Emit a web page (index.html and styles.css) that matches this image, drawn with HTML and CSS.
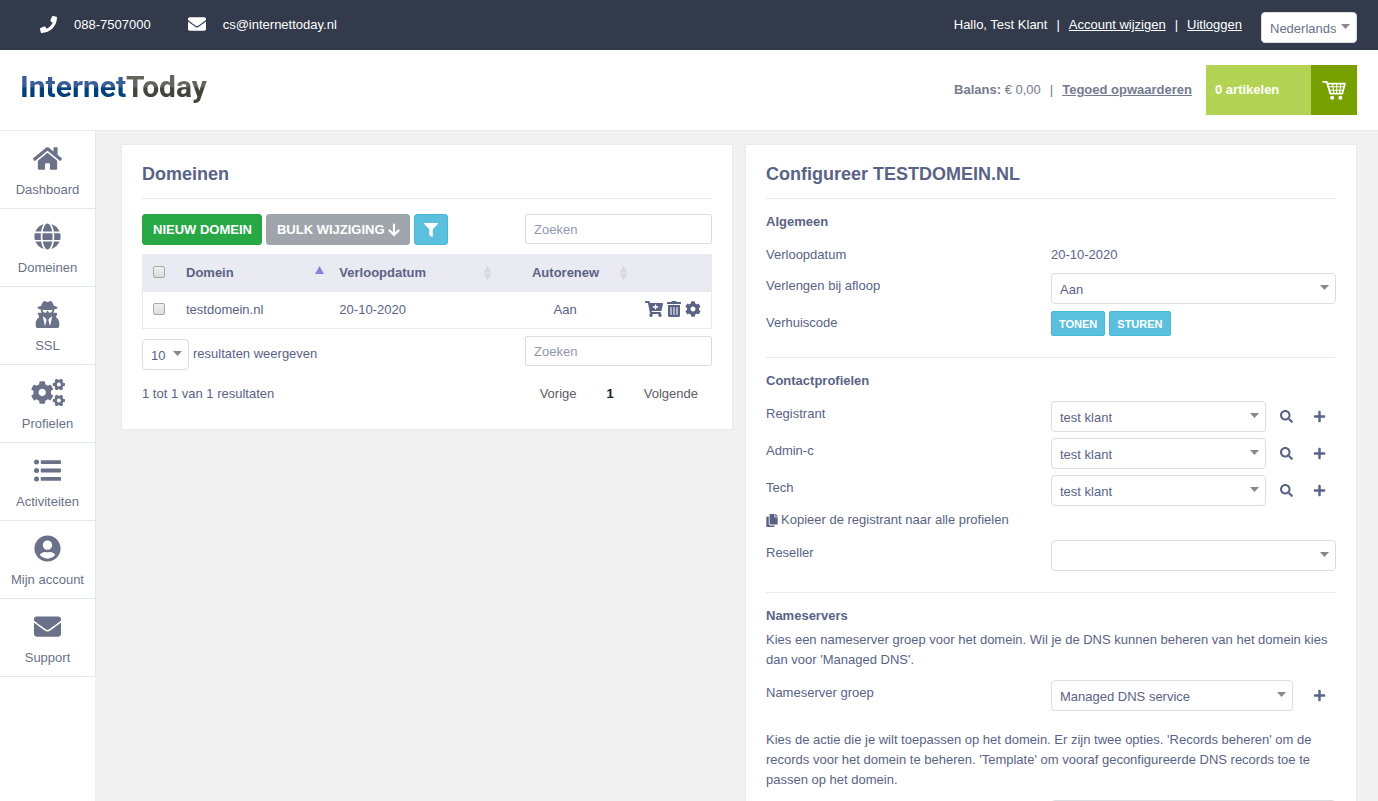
FILE: index.html
```html
<!DOCTYPE html>
<html lang="nl">
<head>
<meta charset="utf-8">
<meta name="viewport" content="width=device-width, initial-scale=1">
<title>Domeinen - InternetToday</title>
<link rel="stylesheet" href="styles.css">
</head>
<body>
<svg class="sprite" aria-hidden="true">
  <symbol id="i-phone" viewBox="0 0 512 512"><path d="M493.4 24.6l-104-24c-11.3-2.6-22.9 3.3-27.5 13.9l-48 112c-4.2 9.8-1.4 21.3 6.9 28l60.6 49.6c-36 76.7-98.9 140.5-177.2 177.2l-49.6-60.6c-6.8-8.3-18.2-11.1-28-6.9l-112 48C3.9 366.5-2 378.1.6 389.4l24 104C27.1 504.2 36.7 512 48 512c256.1 0 464-207.5 464-464 0-11.2-7.7-20.9-18.6-23.4z"/></symbol>
  <symbol id="i-envelope" viewBox="0 0 512 512"><path d="M502.3 190.8c3.9-3.1 9.7-.2 9.7 4.7V400c0 26.5-21.5 48-48 48H48c-26.5 0-48-21.5-48-48V195.6c0-5 5.7-7.8 9.7-4.7 22.4 17.4 52.1 39.5 154.1 113.6 21.1 15.4 56.7 47.8 92.2 47.6 35.7.3 72-32.8 92.3-47.6 102-74.1 131.6-96.3 154-113.7zM256 320c23.2.4 56.6-29.2 73.4-41.4 132.7-96.3 142.8-104.7 173.4-128.7 5.8-4.5 9.2-11.5 9.2-18.9v-19c0-26.5-21.5-48-48-48H48c-26.5 0-48 21.5-48 48v19c0 7.4 3.4 14.3 9.2 18.9 30.6 23.9 40.7 32.4 173.4 128.7 16.8 12.2 50.2 41.8 73.4 41.4z"/></symbol>
  <symbol id="i-home" viewBox="0 0 576 512"><path d="M280.37 148.26L96 300.11V464a16 16 0 0 0 16 16l112.06-.29a16 16 0 0 0 15.92-16V368a16 16 0 0 1 16-16h64a16 16 0 0 1 16 16v95.64a16 16 0 0 0 16 16.05L464 480a16 16 0 0 0 16-16V300L295.67 148.26a12.19 12.19 0 0 0-15.3 0zM571.6 251.47L488 182.56V44.05a12 12 0 0 0-12-12h-56a12 12 0 0 0-12 12v72.61L318.47 43a48 48 0 0 0-61 0L4.34 251.47a12 12 0 0 0-1.6 16.9l25.5 31A12 12 0 0 0 45.15 301l235.22-193.74a12.19 12.19 0 0 1 15.3 0L530.9 301a12 12 0 0 0 16.9-1.6l25.5-31a12 12 0 0 0-1.7-16.93z"/></symbol>
  <symbol id="i-globe" viewBox="0 0 496 512"><path d="M336.5 160C322 70.7 287.8 8 248 8s-74 62.7-88.5 152h177zM152 256c0 22.2 1.2 43.5 3.3 64h185.3c2.1-20.5 3.3-41.8 3.3-64s-1.2-43.5-3.3-64H155.3c-2.1 20.5-3.3 41.8-3.3 64zm324.7-96c-28.6-67.9-86.5-120.4-158-141.6 24.4 33.8 41.2 84.7 50 141.6h108zM177.2 18.4C105.8 39.6 47.8 92.1 19.3 160h108c8.7-56.9 25.5-107.8 49.9-141.6zM487.4 192H372.7c2.1 21 3.3 42.5 3.3 64s-1.2 43-3.3 64h114.6c5.5-20.5 8.6-41.8 8.6-64s-3.1-43.5-8.5-64zM120 256c0-21.5 1.2-43 3.3-64H8.6C3.2 212.5 0 233.8 0 256s3.2 43.5 8.6 64h114.6c-2-21-3.2-42.5-3.2-64zm39.5 96c14.5 89.3 48.7 152 88.5 152s74-62.7 88.5-152h-177zm159.3 141.6c71.4-21.2 129.4-73.7 158-141.6h-108c-8.8 56.9-25.6 107.8-50 141.6zM19.3 352c28.6 67.9 86.5 120.4 158 141.6-24.4-33.8-41.2-84.7-50-141.6h-108z"/></symbol>
  <symbol id="i-secret" viewBox="0 0 448 512"><path d="M383.9 308.3l23.9-62.6c4-10.5-3.7-21.7-15-21.7h-58.5c11-18.9 17.8-40.6 17.8-64v-.3c39.2-7.8 64-19.1 64-31.7 0-13.3-27.3-25.1-70.1-33-9.2-32.8-27-65.8-40.6-82.8-9.5-11.9-25.9-15.6-39.5-8.8l-27.6 13.8c-9 4.5-19.6 4.5-28.6 0L182.1 3.4c-13.6-6.8-30-3.1-39.5 8.8-13.5 17-31.4 50-40.6 82.8-42.7 7.9-70 19.7-70 33 0 12.6 24.8 23.9 64 31.7v.3c0 23.4 6.8 45.1 17.8 64H56.3c-11.5 0-19.2 11.7-14.7 22.3l25.8 60.2C27.3 329.8 0 372.7 0 422.4v44.8C0 491.9 20.1 512 44.8 512h358.4c24.7 0 44.8-20.1 44.8-44.8v-44.8c0-48.4-25.8-90.4-64.1-114.1zM176 480l-41.6-192 49.6 32 24 40-32 120zm96 0l-32-120 24-40 49.6-32L272 480zm41.7-298.5c-3.9 11.9-7 24.6-16.5 33.4-10.1 9.3-48 22.4-64-25-2.8-8.4-15.4-8.4-18.3 0-17 50.2-56 32.4-64 25-9.5-8.8-12.7-21.5-16.5-33.4-.8-2.5-6.3-5.7-6.3-5.8v-10.8c28.3 3.6 61 5.8 96 5.8s67.7-2.1 96-5.8v10.8c-.1.1-5.6 3.2-6.4 5.8z"/></symbol>
  <symbol id="i-cog" viewBox="0 0 512 512"><path d="M487.4 315.7l-42.6-24.6c4.3-23.2 4.3-47 0-70.2l42.6-24.6c4.9-2.8 7.1-8.6 5.5-14-11.1-35.6-30-67.8-54.7-94.6-3.8-4.1-10-5.1-14.8-2.3L380.8 110c-17.9-15.4-38.5-27.3-60.8-35.1V25.8c0-5.6-3.9-10.5-9.4-11.7-36.7-8.2-74.3-7.8-109.2 0-5.5 1.2-9.4 6.1-9.4 11.7V75c-22.2 7.9-42.8 19.8-60.8 35.1L88.7 85.5c-4.9-2.8-11-1.9-14.8 2.3-24.7 26.7-43.6 58.9-54.7 94.6-1.7 5.4.6 11.2 5.5 14L67.3 221c-4.3 23.2-4.3 47 0 70.2l-42.6 24.6c-4.9 2.8-7.1 8.6-5.5 14 11.1 35.6 30 67.8 54.7 94.6 3.8 4.1 10 5.1 14.8 2.3l42.6-24.6c17.9 15.4 38.5 27.3 60.8 35.1v49.2c0 5.6 3.9 10.5 9.4 11.7 36.7 8.2 74.3 7.8 109.2 0 5.5-1.2 9.4-6.1 9.4-11.7v-49.2c22.2-7.9 42.8-19.8 60.8-35.1l42.6 24.6c4.9 2.8 11 1.9 14.8-2.3 24.7-26.7 43.6-58.9 54.7-94.6 1.5-5.5-.7-11.3-5.6-14.1zM256 336c-44.1 0-80-35.9-80-80s35.9-80 80-80 80 35.9 80 80-35.9 80-80 80z"/></symbol>
  <symbol id="i-cogs" viewBox="0 0 640 512"><use href="#i-cog" x="-12" y="34" width="444" height="444"/><g transform="rotate(30 526 104)"><use href="#i-cog" x="406" y="-16" width="240" height="240"/></g><g transform="rotate(30 526 408)"><use href="#i-cog" x="406" y="288" width="240" height="240"/></g></symbol>
  <symbol id="i-list" viewBox="0 0 512 512"><circle cx="48" cy="96" r="48"/><circle cx="48" cy="256" r="48"/><circle cx="48" cy="416" r="48"/><rect x="128" y="60" width="384" height="72" rx="16"/><rect x="128" y="220" width="384" height="72" rx="16"/><rect x="128" y="380" width="384" height="72" rx="16"/></symbol>
  <symbol id="i-user" viewBox="0 0 496 512"><path d="M248 8C111 8 0 119 0 256s111 248 248 248 248-111 248-248S385 8 248 8zm0 96c48.600 0 88 39.400 88 88s-39.400 88-88 88-88-39.400-88-88 39.400-88 88-88zm0 344c-58.700 0-111.300-26.600-146.500-68.200 18.800-35.400 55.600-59.800 98.500-59.800 2.400 0 4.800.4 7.100 1.100 13 4.200 26.600 6.900 40.900 6.900 14.300 0 28-2.700 40.900-6.900 2.300-.7 4.700-1.100 7.100-1.100 42.900 0 79.700 24.400 98.500 59.800C359.300 421.400 306.700 448 248 448z"/></symbol>
  <symbol id="i-filter" viewBox="0 0 512 512"><path d="M487.976 0H24.028C2.71 0-8.047 25.866 7.058 40.971L192 225.941V432c0 7.831 3.821 15.17 10.237 19.662l80 55.98C298.02 518.69 320 507.493 320 487.98V225.941l184.947-184.97C520.021 25.896 509.338 0 487.976 0z"/></symbol>
  <symbol id="i-down" viewBox="0 0 12 14"><path d="M6 1.500V12M1.500 7.500L6 12l4.500-4.500" fill="none" stroke="currentColor" stroke-width="2.200" stroke-linecap="round"/></symbol>
  <symbol id="i-cartplus" viewBox="0 0 576 512"><path d="M504.717 320H211.572l6.545 32h268.418c15.401 0 26.816 14.301 23.403 29.319l-5.517 24.276C523.112 414.668 536 433.828 536 456c0 31.202-25.519 56.444-56.824 55.994-29.823-.429-54.350-24.631-55.155-54.447-.44-16.287 6.085-31.049 16.803-41.548H231.176C241.553 426.165 248 440.326 248 456c0 31.813-26.528 57.431-58.670 55.938-28.540-1.325-51.751-24.385-53.251-52.917-1.158-22.034 10.436-41.455 28.051-51.586L93.883 64H24C10.745 64 0 53.255 0 40V24C0 10.745 10.745 0 24 0h102.529c11.401 0 21.228 8.021 23.513 19.190L159.208 64H551.990c15.401 0 26.816 14.301 23.403 29.319l-47.273 208C525.637 312.246 515.923 320 504.717 320zM408 168h-48v-40c0-8.837-7.163-16-16-16h-16c-8.837 0-16 7.163-16 16v40h-48c-8.837 0-16 7.163-16 16v16c0 8.837 7.163 16 16 16h48v40c0 8.837 7.163 16 16 16h16c8.837 0 16-7.163 16-16v-40h48c8.837 0 16-7.163 16-16v-16c0-8.837-7.163-16-16-16z"/></symbol>
  <symbol id="i-trash" viewBox="0 0 448 512"><path d="M32 464a48 48 0 0 0 48 48h288a48 48 0 0 0 48-48V128H32zm272-256a16 16 0 0 1 32 0v224a16 16 0 0 1-32 0zm-96 0a16 16 0 0 1 32 0v224a16 16 0 0 1-32 0zm-96 0a16 16 0 0 1 32 0v224a16 16 0 0 1-32 0zM432 32H312l-9.400-18.700A24 24 0 0 0 281.100 0H166.800a23.720 23.720 0 0 0-21.400 13.300L136 32H16A16 16 0 0 0 0 48v32a16 16 0 0 0 16 16h416a16 16 0 0 0 16-16V48a16 16 0 0 0-16-16z"/></symbol>
  <symbol id="i-search" viewBox="0 0 512 512"><path d="M505 442.700L405.300 343c-4.500-4.500-10.600-7-17-7H372c27.600-35.300 44-79.700 44-128C416 93.100 322.900 0 208 0S0 93.100 0 208s93.100 208 208 208c48.300 0 92.700-16.400 128-44v16.300c0 6.400 2.500 12.500 7 17l99.700 99.700c9.400 9.400 24.600 9.400 33.900 0l28.300-28.300c9.400-9.400 9.400-24.600.1-34zM208 336c-70.700 0-128-57.200-128-128 0-70.700 57.200-128 128-128 70.700 0 128 57.200 128 128 0 70.700-57.200 128-128 128z"/></symbol>
  <symbol id="i-plus" viewBox="0 0 448 512"><path d="M416 208H272V64c0-17.670-14.330-32-32-32h-32c-17.670 0-32 14.330-32 32v144H32c-17.670 0-32 14.330-32 32v32c0 17.670 14.330 32 32 32h144v144c0 17.670 14.330 32 32 32h32c17.670 0 32-14.330 32-32V304h144c17.670 0 32-14.330 32-32v-32c0-17.670-14.330-32-32-32z"/></symbol>
  <symbol id="i-copy" viewBox="0 0 448 512"><path d="M320 448v40c0 13.255-10.745 24-24 24H24c-13.255 0-24-10.745-24-24V120c0-13.255 10.745-24 24-24h72v296c0 30.879 25.121 56 56 56h168zm0-344V0H152c-13.255 0-24 10.745-24 24v368c0 13.255 10.745 24 24 24h272c13.255 0 24-10.745 24-24V128H344c-13.200 0-24-10.800-24-24zm120.971-31.029L375.029 7.029A24 24 0 0 0 358.059 0H352v96h96v-6.059a24 24 0 0 0-7.029-16.970z"/></symbol>
  <symbol id="i-basket" viewBox="0 0 26 22"><g fill="none" stroke="currentColor" stroke-width="2"><path d="M1 2h4l4 13h13l3-11H6" stroke-linejoin="round" stroke-linecap="round"/><path d="M7 7.500h17M8 11.300h15M11.500 4l1.300 11M16 4v11M20.500 4l-1.300 11" stroke-width="1.200"/></g><circle cx="11" cy="19.500" r="2.200"/><circle cx="20" cy="19.500" r="2.200"/></symbol>
  <symbol id="i-sort" viewBox="0 0 9 14"><path d="M4.500 0L8.500 6.500h-8zM4.500 14L.5 7.500h8z"/></symbol>
  <symbol id="i-asc" viewBox="0 0 9 14"><path d="M4.500 0L9 8H0z"/></symbol>
</svg>

<div class="topbar">
  <div class="contact">
    <svg class="contact-icon"><use href="#i-phone"/></svg><span>088-7507000</span>
    <svg class="contact-icon contact-mail"><use href="#i-envelope"/></svg><span>cs@internettoday.nl</span>
  </div>
  <div class="session">
    <span>Hallo, Test Klant</span><span>|</span><a href="#">Account wijzigen</a><span>|</span><a href="#">Uitloggen</a>
    <select class="select language" aria-label="Taal"><option>Nederlands</option></select>
  </div>
</div>

<header class="header">
  <a class="logo" href="#" aria-label="InternetToday"><span class="logo-blue">Internet</span><span class="logo-grey">Today</span></a>
  <div class="account">
    <span><b>Balans:</b> € 0,00</span><span>|</span><a href="#">Tegoed opwaarderen</a>
    <a class="cart" href="#"><span class="cart-count">0 artikelen</span><span class="cart-icon"><svg><use href="#i-basket"/></svg></span></a>
  </div>
</header>

<div class="shell">
  <nav class="sidebar">
    <a href="#"><svg><use href="#i-home"/></svg>Dashboard</a>
    <a href="#"><svg><use href="#i-globe"/></svg>Domeinen</a>
    <a href="#"><svg><use href="#i-secret"/></svg>SSL</a>
    <a href="#"><svg class="wide"><use href="#i-cogs"/></svg>Profielen</a>
    <a href="#"><svg><use href="#i-list"/></svg>Activiteiten</a>
    <a href="#"><svg><use href="#i-user"/></svg>Mijn account</a>
    <a href="#"><svg><use href="#i-envelope"/></svg>Support</a>
  </nav>

  <main class="content">
    <section class="panel">
      <h2>Domeinen</h2>
      <div class="toolbar">
        <button class="btn btn-green" type="button">NIEUW DOMEIN</button>
        <button class="btn btn-grey" type="button">BULK WIJZIGING <svg><use href="#i-down"/></svg></button>
        <button class="btn btn-blue btn-filter" type="button" aria-label="Filter"><svg><use href="#i-filter"/></svg></button>
        <input class="search" type="search" placeholder="Zoeken" aria-label="Zoeken">
      </div>
      <table class="domains">
        <colgroup><col class="c-check"><col class="c-name"><col class="c-date"><col class="c-renew"><col></colgroup>
        <thead>
          <tr>
            <th><input class="check" type="checkbox" aria-label="Alles selecteren"></th>
            <th><div class="sort">Domein<svg class="asc"><use href="#i-asc"/></svg></div></th>
            <th><div class="sort">Verloopdatum<svg><use href="#i-sort"/></svg></div></th>
            <th><div class="sort sort-center">Autorenew<svg><use href="#i-sort"/></svg></div></th>
            <th></th>
          </tr>
        </thead>
        <tbody>
          <tr>
            <td><input class="check" type="checkbox" aria-label="testdomein.nl selecteren"></td>
            <td>testdomein.nl</td>
            <td>20-10-2020</td>
            <td class="center">Aan</td>
            <td><div class="actions">
              <button type="button" aria-label="Bestellen"><svg class="w18"><use href="#i-cartplus"/></svg></button>
              <button type="button" aria-label="Verwijderen"><svg class="w14"><use href="#i-trash"/></svg></button>
              <button type="button" aria-label="Instellingen"><svg class="w16"><use href="#i-cog"/></svg></button>
            </div></td>
          </tr>
        </tbody>
      </table>
      <div class="table-tools">
        <label class="length"><select class="select length-select"><option>10</option></select><span>resultaten weergeven</span></label>
        <input class="search" type="search" placeholder="Zoeken" aria-label="Zoeken in tabel">
      </div>
      <div class="table-foot">
        <span>1 tot 1 van 1 resultaten</span>
        <div class="pages"><button type="button">Vorige</button><button class="current" type="button">1</button><button type="button">Volgende</button></div>
      </div>
    </section>

    <section class="panel">
      <h2>Configureer TESTDOMEIN.NL</h2>
      <div class="group">
        <h3>Algemeen</h3>
        <div class="rows">
          <div class="row row-text"><span class="label">Verloopdatum</span><span class="label">20-10-2020</span></div>
          <div class="row"><label class="label" for="renew">Verlengen bij afloop</label><div class="field"><select class="select" id="renew"><option>Aan</option></select></div></div>
          <div class="row"><span class="label">Verhuiscode</span><div class="field small-buttons"><button class="btn btn-blue btn-small" type="button">TONEN</button><button class="btn btn-blue btn-small" type="button">STUREN</button></div></div>
        </div>
      </div>
      <div class="group">
        <h3>Contactprofielen</h3>
        <div class="rows">
          <div class="row"><label class="label" for="registrant">Registrant</label><div class="field"><select class="select" id="registrant"><option>test klant</option></select><button class="icon-btn" type="button" aria-label="Zoek registrant"><svg><use href="#i-search"/></svg></button><button class="icon-btn" type="button" aria-label="Nieuwe registrant"><svg><use href="#i-plus"/></svg></button></div></div>
          <div class="row"><label class="label" for="admin">Admin-c</label><div class="field"><select class="select" id="admin"><option>test klant</option></select><button class="icon-btn" type="button" aria-label="Zoek admin-c"><svg><use href="#i-search"/></svg></button><button class="icon-btn" type="button" aria-label="Nieuwe admin-c"><svg><use href="#i-plus"/></svg></button></div></div>
          <div class="row"><label class="label" for="tech">Tech</label><div class="field"><select class="select" id="tech"><option>test klant</option></select><button class="icon-btn" type="button" aria-label="Zoek tech"><svg><use href="#i-search"/></svg></button><button class="icon-btn" type="button" aria-label="Nieuwe tech"><svg><use href="#i-plus"/></svg></button></div></div>
        </div>
        <a class="copy" href="#"><svg><use href="#i-copy"/></svg>Kopieer de registrant naar alle profielen</a>
        <div class="rows">
          <div class="row"><label class="label" for="reseller">Reseller</label><div class="field"><select class="select" id="reseller"><option></option></select></div></div>
        </div>
      </div>
      <div class="group">
        <h3>Nameservers</h3>
        <p class="intro">Kies een nameserver groep voor het domein. Wil je de DNS kunnen beheren van het domein kies dan voor 'Managed DNS'.</p>
        <div class="rows">
          <div class="row"><label class="label" for="nsgroup">Nameserver groep</label><div class="field field-wide"><select class="select" id="nsgroup"><option>Managed DNS service</option></select><button class="icon-btn" type="button" aria-label="Nieuwe nameserver groep"><svg><use href="#i-plus"/></svg></button></div></div>
        </div>
        <p class="explain">Kies de actie die je wilt toepassen op het domein. Er zijn twee opties. 'Records beheren' om de records voor het domein te beheren. 'Template' om vooraf geconfigureerde DNS records toe te passen op het domein.</p>
        <div class="rows">
          <div class="row"><span></span><div class="field"><select class="select" aria-label="Actie"><option></option></select></div></div>
        </div>
      </div>
    </section>
  </main>
</div>
</body>
</html>
```

FILE: styles.css
```css
* { box-sizing: border-box; }

body {
  margin: 0;
  height: 100vh;
  overflow: hidden;
  display: flex;
  flex-direction: column;
  background: #f1f1f1;
  color: #5a6385;
  font: 13px/20px "Liberation Sans", Arial, sans-serif;
}

button, input, select { font: inherit; color: inherit; }
button { cursor: pointer; }
svg { display: block; fill: currentColor; flex: none; }
.sprite { position: absolute; width: 0; height: 0; }

/* Top bar */
.topbar {
  flex: none;
  height: 50px;
  padding: 0 21px 0 40px;
  display: flex;
  justify-content: space-between;
  align-items: center;
  background: #323a4b;
  color: #fff;
}
.topbar a { color: #fff; }
.contact { display: flex; align-items: center; gap: 17px; }
.contact-icon { width: 17px; height: 17px; margin-bottom: 2px; }
.contact-mail { width: 18px; height: 18px; margin-left: 20px; }
.session { display: flex; align-items: center; gap: 9px; }
.language { width: 96px; margin: 5px 0 0 10px; color: #6b7189; }
.session > span, .session > a { line-height: 20px; }

/* Header */
.header {
  flex: none;
  height: 81px;
  padding: 0 21px 0 20px;
  display: flex;
  justify-content: space-between;
  align-items: center;
  background: #fff;
  border-bottom: 1px solid #e7e9ee;
  color: #757b8f;
}
.logo {
  display: flex;
  padding-bottom: 6px;
  font: bold 30px/40px Roboto, "Liberation Sans", sans-serif;
  text-decoration: none;
}
.logo-blue, .logo-grey {
  color: transparent;
  -webkit-background-clip: text;
  background-clip: text;
}
.logo-blue { background-image: linear-gradient(#3a5f96 48%, #00407a 54%); }
.logo-grey { background-image: linear-gradient(#62665f 48%, #40443a 54%); }
.account { display: flex; align-items: center; gap: 9px; }
.account a { color: #757b8f; font-weight: bold; }
.account .cart {
  display: flex;
  width: 151px;
  height: 50px;
  margin-left: 5px;
  color: #fff;
  text-decoration: none;
}
.cart-count { flex: 1; padding: 15px 9px; background: #b2d353; }
.cart-icon { width: 46px; display: flex; align-items: center; justify-content: center; background: #77a000; }
.cart-icon svg { width: 24px; height: 20px; }

/* Shell */
.shell { flex: 1; min-height: 0; display: flex; align-items: stretch; }
.sidebar { flex: none; width: 96px; padding-right: 1px; background: linear-gradient(to right, #fff 95px, #f1f1f1 95px); }
.sidebar a {
  display: flex;
  flex-direction: column;
  align-items: center;
  gap: 8px;
  margin-right: -1px;
  padding: 14px 0 8px;
  border-right: 1px solid #e3e6ea;
  border-bottom: 1px solid #e3e6ea;
  color: #6a7188;
  text-decoration: none;
}
.sidebar svg { width: 29px; height: 27px; }
.sidebar .wide { width: 34px; }

.content {
  flex: 1;
  min-width: 0;
  display: grid;
  grid-template-columns: 1fr 1fr;
  align-items: start;
  gap: 12px;
  padding: 13px 21px 0 25px;
}
.panel { min-width: 0; padding: 19px 20px 25px; background: #fff; border: 1px solid #e9e9f2; }
h2 { margin: 0; padding-bottom: 14px; border-bottom: 1px solid #e9e9f2; font-size: 18px; line-height: 20px; }
h3 { margin: 0; font-size: 13px; line-height: 20px; }
p { margin: 0; }

/* Controls */
.btn {
  display: flex;
  align-items: center;
  gap: 3px;
  height: 31px;
  padding: 0 9px 0 10px;
  border: 1px solid;
  border-radius: 3px;
  color: #fff;
  font-weight: bold;
}
.btn-green { background: #28a745; border-color: #28a745; }
.btn-grey { background: #a0a5ac; border-color: #a0a5ac; }
.btn-grey svg { width: 12px; height: 14px; }
.btn-blue { background: #5bc0de; border-color: #46b8da; }
.btn-filter { width: 34px; justify-content: center; padding: 0; }
.btn-filter svg { width: 14px; height: 14px; }
.btn-small { height: 25px; padding: 0 7px; border-radius: 2px; font-size: 11px; }

.search {
  width: 187px;
  height: 30px;
  margin-left: auto;
  padding: 0 8px;
  background: #fff;
  border: 1px solid #dcdddf;
  border-radius: 2px;
}
.search::placeholder { color: #9197b0; }
.select {
  appearance: none;
  min-width: 0;
  height: 31px;
  padding: 2px 20px 0 8px;
  border: 1px solid #dcdddf;
  border-radius: 4px;
  background: #fff url("data:image/svg+xml,%3Csvg xmlns='http://www.w3.org/2000/svg' width='9' height='5'%3E%3Cpath d='M0 0h9L4.500 5z' fill='%23888'/%3E%3C/svg%3E") no-repeat right 6px top 11px;
}
.check {
  appearance: none;
  display: block;
  width: 12px;
  height: 12px;
  margin: 0 0 3px;
  border: 1px solid #a9a9a9;
  border-radius: 2px;
  background: linear-gradient(#f0f0f0, #dcdcdc);
}

/* Domain list */
.toolbar { display: flex; align-items: flex-start; gap: 4px; padding: 15px 0 9px; }
.domains { width: 100%; table-layout: fixed; border-collapse: separate; border-spacing: 0; border: 1px solid #e9e9f2; border-top: 0; }
.c-check { width: 33px; }
.c-name { width: 27%; }
.c-date { width: 29.5%; }
.c-renew { width: 24%; }
.domains th { padding: 9px 5px 9px 10px; background: #eaeaf3; text-align: left; }
.domains td { padding: 8px 10px; }
.domains .center { text-align: center; }
.sort { display: flex; justify-content: space-between; align-items: center; }
.sort svg { width: 9px; height: 14px; color: #d9d9db; }
.sort .asc { color: #7f84dd; }
.sort-center::before { content: ""; width: 5px; }
.actions { display: flex; align-items: center; justify-content: flex-end; gap: 4px; height: 20px; padding-bottom: 2px; }
.actions button { padding: 0; border: 0; background: none; }
.actions svg { height: 16px; }
.w18 { width: 18px; }
.w14 { width: 14px; }
.w16 { width: 16px; }
.table-tools { display: flex; align-items: flex-start; padding-top: 7px; }
.length { display: flex; align-items: center; gap: 4px; padding-top: 3px; }
.length span { padding-bottom: 2px; }
.length-select { width: 47px; }
.table-foot { display: flex; justify-content: space-between; padding-top: 14px; }
.pages { display: flex; gap: 2px; color: #5c5c62; }
.pages button { padding: 0 14px; border: 0; background: none; }
.pages .current { font-weight: bold; color: #222; }

/* Domain settings */
.group { padding-top: 13px; }
.group + .group { margin-top: 21px; border-top: 1px solid #e9e9f2; }
.rows { display: flex; flex-direction: column; gap: 6px; margin-top: 10px; }
.row { display: grid; grid-template-columns: 1fr 1fr; align-items: start; }
.row-text { min-height: 25px; }
.label { padding-top: 3px; }
.field { display: flex; }
.field .select { flex: 1; }
.field .icon-btn:nth-child(2) { margin-left: 4px; }
.field-wide .icon-btn:nth-child(2) { margin-left: 10px; }
.small-buttons { gap: 4px; padding-top: 1px; }
.icon-btn {
  width: 33px;
  height: 31px;
  padding: 0;
  border: 0;
  background: none;
  display: flex;
  align-items: center;
  justify-content: center;
}
.icon-btn svg { width: 13px; height: 13px; }
.copy { display: flex; align-items: center; gap: 3px; margin-top: 4px; color: inherit; text-decoration: none; }
.copy svg { width: 12px; height: 13px; }
.intro { margin-top: 4px; }
.explain { margin-top: 19px; }
```
